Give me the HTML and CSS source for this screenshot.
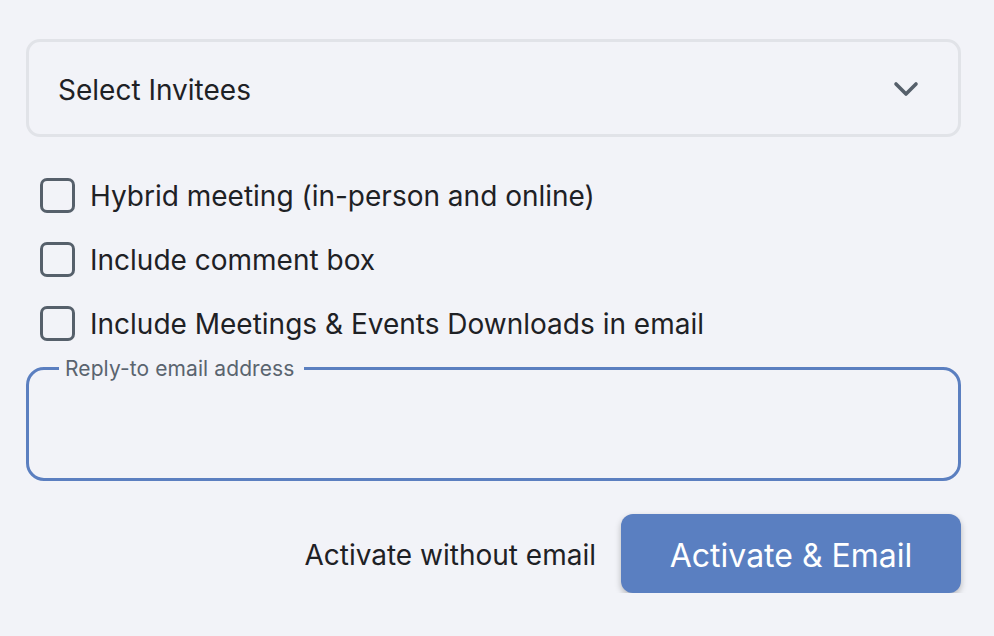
FILE: index.html
```html
<!DOCTYPE html>
<html>
<head>
<meta charset="utf-8">
<link rel="stylesheet" href="styles.css">
</head>
<body>
<div class="form">
  <div class="select">
    <span class="select-label">Select Invitees</span>
    <svg class="chev" width="26" height="16" viewBox="0 0 26 16"><path d="M3 3 L13 13 L23 3" fill="none" stroke="#56606b" stroke-width="3.6" stroke-linecap="round" stroke-linejoin="round"/></svg>
  </div>
  <div class="checks">
    <label class="check"><span class="box"></span><span class="check-text">Hybrid meeting (in-person and online)</span></label>
    <label class="check"><span class="box"></span><span class="check-text">Include comment box</span></label>
    <label class="check"><span class="box"></span><span class="check-text">Include Meetings &amp; Events Downloads in email</span></label>
  </div>
  <fieldset class="field">
    <legend>Reply-to email address</legend>
  </fieldset>
  <div class="actions">
    <span class="link">Activate without email</span>
    <button class="primary">Activate &amp; Email</button>
  </div>
</div>
</body>
</html>
```
FILE: styles.css
```css
* { box-sizing: border-box; }
html, body { margin: 0; background: #f2f3f8; }
body { font-family: Inter, "Open Sans", sans-serif; color: #1e2125; }
.form { padding: 39px 33px 0 26px; }
.select {
  height: 98px;
  border: 3px solid #e1e3e8;
  border-radius: 14px;
  display: flex;
  align-items: center;
  justify-content: space-between;
  padding: 4px 39px 0 29px;
}
.select-label { font-size: 28px; }
.chev { display: block; margin-top: -3px; }
.checks { display: flex; flex-direction: column; gap: 30px; margin-top: 41px; padding-left: 14px; }
.check { display: flex; align-items: center; gap: 15px; font-size: 28px; height: 34px; }
.check-text { padding-top: 2px; }
.box { width: 35px; height: 35px; border: 3px solid #56606b; border-radius: 7px; flex: none; }
.field {
  margin: 16px 0 0 0;
  height: 125px;
  border: 3px solid #5b7fc0;
  border-radius: 18px;
  padding: 0 0 0 30px;
}
.field legend { font-size: 21px; color: #5a646f; padding: 0 10px 0 6px; margin-left: 0; letter-spacing: 0.1px; }
.actions { display: flex; justify-content: flex-end; align-items: center; gap: 25px; margin-top: 33px; }
.link { font-size: 28px; padding-top: 3px; }
.primary {
  font-family: inherit;
  font-size: 32px;
  color: #fff;
  background: #5a7fc1;
  border: none;
  border-radius: 12px;
  width: 340px;
  height: 79px;
  box-shadow: 0 3px 6px rgba(0,0,0,0.25);
  padding: 4px 0 0 0;
}
```
